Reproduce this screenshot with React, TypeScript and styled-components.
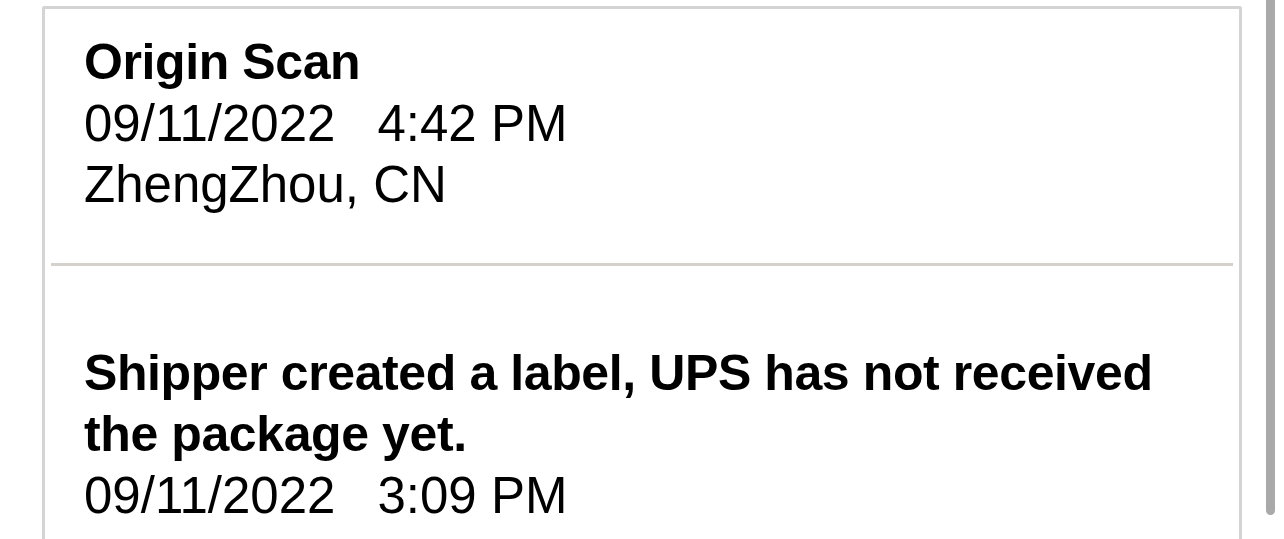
import styled, { createGlobalStyle } from "styled-components";

type Scan = {
  id: number;
  title: string;
  date: string;
  time: string;
  place?: string;
};

const scans: Scan[] = [
  { id: 1, title: "Origin Scan", date: "09/11/2022", time: "4:42 PM", place: "ZhengZhou, CN" },
  {
    id: 2,
    title: "Shipper created a label, UPS has not received the package yet.",
    date: "09/11/2022",
    time: "3:09 PM",
  },
];

function App() {
  return (
    <>
      <GlobalStyle />
      <Page>
        <Card>
          {scans.map((scan, i) => (
            <Item key={scan.id} $first={i === 0} $last={i === scans.length - 1}>
              <Title>{scan.title}</Title>
              <Detail>
                {scan.date}
                <Gap />
                {scan.time}
              </Detail>
              {scan.place && <Detail>{scan.place}</Detail>}
            </Item>
          ))}
        </Card>
        <ScrollTrack>
          <ScrollThumb />
        </ScrollTrack>
      </Page>
    </>
  );
}

const GlobalStyle = createGlobalStyle`
  html, body {
    margin: 0;
    padding: 0;
    background: #ffffff;
    overflow: hidden;
  }
  body {
    font-family: "Liberation Sans", Arial, sans-serif;
    color: #000000;
  }
`;

const Page = styled.div`
  display: flex;
  align-items: flex-start;
  height: 539px;
`;

const Card = styled.section`
  width: 1200px;
  margin: 6px 0 0 42px;
  border: 3px solid #d4d4d4;
  border-bottom: none;
  border-radius: 3px 3px 0 0;
  box-sizing: border-box;
  min-height: 600px;
`;

const Item = styled.article<{ $first: boolean; $last: boolean }>`
  margin: 0 6px;
  padding: ${(p) => (p.$first ? "23px 60px 48px 33px" : "77px 60px 48px 33px")};
  border-bottom: ${(p) => (p.$last ? "none" : "3px solid #d5d2ce")};
`;

const Title = styled.div`
  font-size: 50px;
  line-height: 61px;
  font-weight: 700;
  letter-spacing: -0.4px;
`;

const Detail = styled.div`
  font-size: 51px;
  line-height: 61px;
  font-weight: 400;
  white-space: nowrap;
`;

const Gap = styled.span`
  display: inline-block;
  width: 42px;
`;

const ScrollTrack = styled.div`
  margin-left: 24px;
  width: 9px;
`;

const ScrollThumb = styled.div`
  height: 515px;
  background: #a9a9a9;
  border-radius: 0 0 5px 5px;
`;

export default App;
